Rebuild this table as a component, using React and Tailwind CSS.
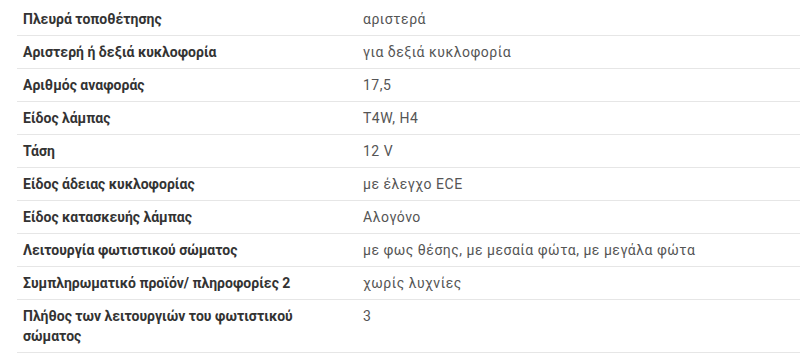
const rows = [
  ['Πλευρά τοποθέτησης', 'αριστερά'],
  ['Αριστερή ή δεξιά κυκλοφορία', 'για δεξιά κυκλοφορία'],
  ['Αριθμός αναφοράς', '17,5'],
  ['Είδος λάμπας', 'T4W, H4'],
  ['Τάση', '12 V'],
  ['Είδος άδειας κυκλοφορίας', 'με έλεγχο ECE'],
  ['Είδος κατασκευής λάμπας', 'Αλογόνο'],
  ['Λειτουργία φωτιστικού σώματος', 'με φως θέσης, με μεσαία φώτα, με μεγάλα φώτα'],
  ['Συμπληρωματικό προϊόν/ πληροφορίες 2', 'χωρίς λυχνίες'],
  ['Πλήθος των λειτουργιών του φωτιστικού σώματος', '3'],
]

export default function App() {
  return (
    <div className="h-[353px] w-[800px] overflow-hidden bg-white pl-[17px] pt-[3px] font-['Roboto',sans-serif] text-[14px] leading-5">
      <table className="w-full border-collapse">
        <tbody>
          {rows.map(([label, value]) => (
            <tr key={label} className="border-b border-[#e6e6e6]">
              <td className="w-[340px] px-[6px] py-[6px] align-top font-bold text-[#333]">{label}</td>
              <td className="px-[6px] py-[6px] align-top tracking-[0.5px] text-[#555]">{value}</td>
            </tr>
          ))}
        </tbody>
      </table>
    </div>
  )
}
